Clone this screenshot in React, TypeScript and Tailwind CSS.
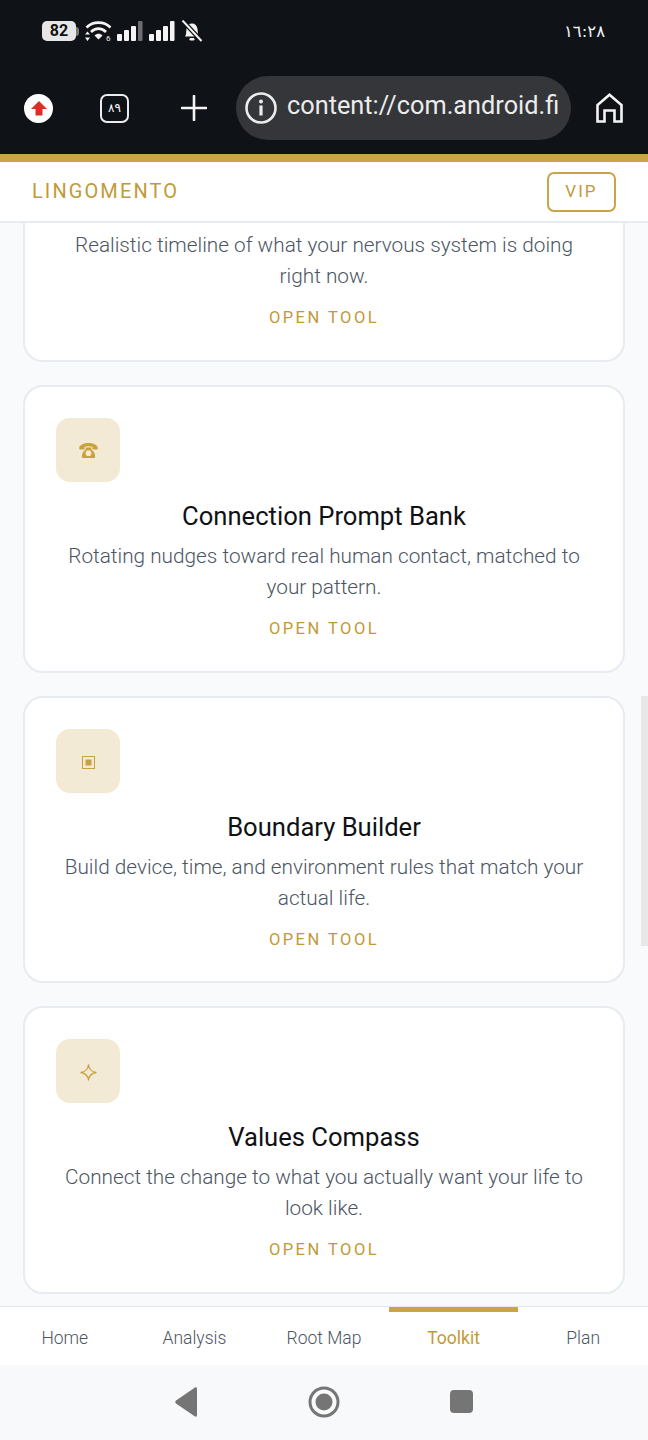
import type { ReactNode } from "react";

const GOLD = "#c9a23f";

const TOOLS: { icon: ReactNode; title: string; text: string }[] = [
  {
    icon: (
      <svg width="19" height="15" viewBox="0 0 19 15" fill={GOLD}>
        <path d="M0.2 5.4C0 2.6 3.5 0 9.5 0C15.5 0 19 2.6 18.8 5.4C18.7 6.3 18 6.6 17 6.6H14.6C13.8 6.6 13.5 6.1 13.5 5.4V3.9C12.4 3.4 11 3.2 9.5 3.2C8 3.2 6.6 3.4 5.5 3.9V5.4C5.5 6.1 5.2 6.6 4.4 6.6H2C1 6.6 0.3 6.3 0.2 5.4Z" />
        <path
          fillRule="evenodd"
          d="M6.6 4.4H12.4V6.2C12.4 6.9 13 7.4 13.8 7.5C15 8.8 16 11 16.2 13.6C16.3 14.5 15.8 15 15 15H4C3.2 15 2.7 14.5 2.8 13.6C3 11 4 8.8 5.2 7.5C6 7.4 6.6 6.9 6.6 6.2ZM9.5 7.3A2.9 2.9 0 1 0 9.5 13.1A2.9 2.9 0 1 0 9.5 7.3Z"
        />
      </svg>
    ),
    title: "Connection Prompt Bank",
    text: "Rotating nudges toward real human contact, matched to your pattern.",
  },
  {
    icon: (
      <svg className="mt-[3px]" width="13" height="13" viewBox="0 0 13 13" fill="none">
        <rect x="0.5" y="0.5" width="12" height="12" stroke={GOLD} />
        <rect x="3.5" y="3.5" width="6" height="6" fill={GOLD} />
      </svg>
    ),
    title: "Boundary Builder",
    text: "Build device, time, and environment rules that match your actual life.",
  },
  {
    icon: (
      <svg className="mt-[3px]" width="17" height="17" viewBox="0 0 17 17" fill="none">
        <path
          d="M8.5 1C9.2 5.2 11.8 7.8 16 8.5C11.8 9.2 9.2 11.8 8.5 16C7.8 11.8 5.2 9.2 1 8.5C5.2 7.8 7.8 5.2 8.5 1Z"
          stroke={GOLD}
          strokeWidth="1.3"
          strokeLinejoin="round"
        />
      </svg>
    ),
    title: "Values Compass",
    text: "Connect the change to what you actually want your life to look like.",
  },
];

const TABS = ["Home", "Analysis", "Root Map", "Toolkit", "Plan"];

function Signal({ dim }: { dim?: boolean }) {
  return (
    <svg width="26" height="20" viewBox="0 0 26 20" fill="#f4f4f4">
      <rect x="0" y="13" width="5" height="7" rx="1" />
      <rect x="7" y="9" width="5" height="11" rx="1" />
      <rect x="14" y="5" width="5" height="15" rx="1" />
      <rect x="21" y="0" width="4.5" height="20" rx="1" fill={dim ? "#6b6d70" : "#f4f4f4"} />
    </svg>
  );
}

function StatusBar() {
  return (
    <div className="flex h-[76px] items-start justify-between pl-[42px] pr-[43px] pt-[20px]">
      <div className="flex items-center">
        <div className="flex items-center">
          <div className="flex h-[20px] w-[34px] items-center justify-center rounded-[5px] bg-[#e6e6e6] text-[16px] font-bold text-[#111]">
            82
          </div>
          <div className="h-[9px] w-[3px] rounded-r-sm bg-[#77797c]" />
        </div>
        <svg className="ml-[6px]" width="27" height="22" viewBox="0 0 27 22" fill="none">
          <path d="M1.5 7.5C8 1 19 1 25.5 7.5" stroke="#f4f4f4" strokeWidth="2.6" />
          <path d="M6 12C10.5 7.5 16.5 7.5 21 12" stroke="#f4f4f4" strokeWidth="2.6" />
          <path d="M9.5 15.5C12 13 15 13 17.5 15.5L13.5 19.5Z" fill="#f4f4f4" />
          <path d="M2.5 11.5L5 14.5H0ZM2.5 21L0 17.5H5Z" fill="#f4f4f4" />
          <text x="21" y="21" fill="#f4f4f4" fontSize="8" fontFamily="Roboto, sans-serif">6</text>
        </svg>
        <div className="ml-[5px]"><Signal dim /></div>
        <div className="ml-[6px]"><Signal /></div>
        <svg className="ml-[6px]" width="22" height="22" viewBox="0 0 22 22" fill="none">
          <path d="M4 16.5C5.5 15 5 12 5.5 9C6 5.5 8 3.5 11 3.5C14 3.5 16 5.5 16.5 9C17 12 16.5 15 18 16.5Z" fill="#f4f4f4" />
          <rect x="8.5" y="18" width="5" height="2.5" rx="1.2" fill="#f4f4f4" />
          <path d="M1.5 0.5L20.5 21" stroke="#0f1217" strokeWidth="4.5" />
          <path d="M1.5 0.5L20.5 21" stroke="#f4f4f4" strokeWidth="2" />
        </svg>
      </div>
      <span className="font-['DejaVu_Sans',sans-serif] text-[16.5px] leading-[24px] text-[#f2f2f2]">
        ١٦:٢٨
      </span>
    </div>
  );
}

function BrowserBar() {
  return (
    <div className="flex h-[64px] items-center pl-[24px]">
      <div className="flex h-[29px] w-[29px] items-center justify-center rounded-full bg-white">
        <svg width="16" height="15" viewBox="0 0 16 15" fill="#d93025">
          <path d="M8 0L16 8H11.5V14.5H4.5V8H0Z" />
        </svg>
      </div>
      <div className="ml-[47px] flex h-[29px] w-[29px] items-center justify-center rounded-[7px] border-[2.5px] border-[#ececec] font-['DejaVu_Sans',sans-serif] text-[12px] text-white">
        ٨٩
      </div>
      <svg className="ml-[52px]" width="26" height="26" viewBox="0 0 26 26" stroke="#f4f4f4" strokeWidth="2.6" strokeLinecap="round">
        <path d="M13 1V25M1 13H25" />
      </svg>
      <div className="ml-[29px] flex h-[64px] w-[335px] items-center rounded-full bg-[#35363a] pl-[9px]">
        <svg width="32" height="32" viewBox="0 0 32 32" fill="none">
          <circle cx="16" cy="16" r="14.5" stroke="#ececec" strokeWidth="2.6" />
          <circle cx="16" cy="9.5" r="2" fill="#ececec" />
          <rect x="14.4" y="13.5" width="3.2" height="10" fill="#ececec" />
        </svg>
        <span className="mb-[5px] ml-[10px] font-['Roboto',sans-serif] text-[25.3px] text-[#ececec]">content://com.android.fi</span>
      </div>
      <svg className="ml-[25px]" width="27" height="30" viewBox="0 0 27 30" fill="none" stroke="#f4f4f4" strokeWidth="2.6">
        <path d="M1.5 28.5V12L13.5 1.8L25.5 12V28.5H18.5V17.5H8.5V28.5Z" />
      </svg>
    </div>
  );
}

function OpenTool() {
  return (
    <div className="mt-[10px] text-center text-[16.5px] font-normal leading-[31px] tracking-[0.15em] text-[#c19a38]">
      OPEN TOOL
    </div>
  );
}

function ToolCard({ icon, title, text }: { icon: ReactNode; title: string; text: string }) {
  return (
    <div className="flex h-[287.67px] shrink-0 flex-col rounded-[20px] border-2 border-[#e7ebf2] bg-white px-[31px] pt-[31px]">
      <div className="flex h-[64px] w-[64px] items-center justify-center rounded-[14px] bg-[#f3ead6]">
        {icon}
      </div>
      <h3 className="mt-[17px] text-center text-[25.6px] font-normal leading-[34px] text-[#0f1115]">{title}</h3>
      <p className="mt-[8px] text-center text-[20.77px] font-light leading-[31px] text-[#4b5563]">{text}</p>
      <OpenTool />
    </div>
  );
}

export default function App() {
  return (
    <div className="flex h-[1440px] w-[648px] flex-col overflow-hidden bg-[#f8fafc] font-['Roboto',sans-serif]">
      <div className="h-[154px] shrink-0 bg-[#0f1217]">
        <StatusBar />
        <BrowserBar />
      </div>
      <div className="h-[8px] shrink-0 bg-[#c9a547]" />
      <header className="flex h-[61px] shrink-0 items-center justify-between border-b-2 border-[#e7ebf2] bg-white pl-[32px] pr-[32px]">
        <span className="mb-[1px] text-[20px] tracking-[0.105em] text-[#c19a38]">LINGOMENTO</span>
        <div className="flex h-[40px] w-[69px] items-center justify-center rounded-[7px] border-2 border-[#c9a547] text-[17px] tracking-[0.12em] text-[#c19a38]">
          VIP
        </div>
      </header>
      <main className="relative min-h-0 flex-1 overflow-hidden">
        <div className="flex flex-col gap-[23px] px-[23px]">
          <div className="-mt-[20px] flex h-[159px] shrink-0 flex-col justify-end rounded-[20px] border-2 border-[#e7ebf2] bg-white px-[31px] pb-[27px]">
            <p className="text-center text-[20.77px] font-light leading-[31px] text-[#4b5563]">
              Realistic timeline of what your nervous system is doing right now.
            </p>
            <OpenTool />
          </div>
          {TOOLS.map((t) => (
            <ToolCard key={t.title} {...t} />
          ))}
        </div>
        <div className="absolute right-0 top-[473px] h-[250px] w-[7px] bg-[#e8e8e9]" />
      </main>
      <nav className="grid h-[59px] shrink-0 grid-cols-5 border-t-[1.5px] border-[#e2e8f0] bg-white">
        {TABS.map((tab) => {
          const active = tab === "Toolkit";
          return (
            <div
              key={tab}
              className={
                active
                  ? "flex items-center justify-center border-t-[5px] border-[#c9a547] pb-[1px] text-[17.5px] font-normal text-[#c19a38]"
                  : "flex items-center justify-center border-t-[5px] border-transparent pb-[1px] text-[17.5px] font-light text-[#4b5563]"
              }
            >
              {tab}
            </div>
          );
        })}
      </nav>
      <div className="flex h-[75px] shrink-0 items-center justify-center bg-[#f8f9fb] pb-[2px]">
        <svg width="22" height="32" viewBox="0 0 22 32" fill="#757575">
          <path d="M20 1.5C21 1 22 1.5 22 3V29C22 30.5 21 31 20 30.5L1 17.5C0 16.8 0 15.2 1 14.5Z" />
        </svg>
        <svg className="ml-[111px]" width="32" height="32" viewBox="0 0 32 32" fill="none">
          <circle cx="16" cy="16" r="14" stroke="#757575" strokeWidth="3" />
          <circle cx="16" cy="16" r="8.5" fill="#757575" />
        </svg>
        <div className="ml-[110px] h-[23px] w-[23px] rounded-[4px] bg-[#757575]" />
      </div>
    </div>
  );
}
